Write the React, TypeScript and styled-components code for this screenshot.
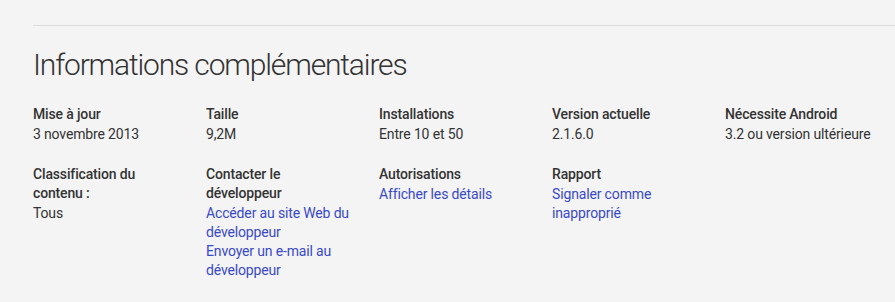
import React from "react";
import styled, { createGlobalStyle } from "styled-components";

const Global = createGlobalStyle`
  html, body { margin: 0; padding: 0; background: #f4f4f4; }
  body { font-family: Roboto, "Liberation Sans", sans-serif; color: #333; }
`;

const Section = styled.section`
  padding: 25px 0 0 33px;
`;

const Divider = styled.hr`
  margin: 0;
  border: 0;
  border-top: 1px solid #dcdcdc;
`;

const Title = styled.h2`
  margin: 19px 0 0;
  font-size: 30px;
  font-weight: 300;
  line-height: 40px;
  letter-spacing: -1.15px;
  color: #333;
`;

const Grid = styled.div`
  display: grid;
  grid-template-columns: repeat(5, 173px);
  row-gap: 21px;
  margin-top: 20px;
  font-size: 14px;
  line-height: 19px;
  letter-spacing: -0.15px;
`;

const Item = styled.div`
  padding-right: 20px;
`;

const Label = styled.div`
  font-weight: 500;
  color: #333;
  margin-bottom: 1px;
`;

const Value = styled.div`
  font-weight: 400;
  color: #333;
`;

const Link = styled.a`
  display: block;
  color: #3949c8;
  text-decoration: none;
`;

type Info = { label: string; values?: string[]; links?: string[] };

const items: Info[] = [
  { label: "Mise à jour", values: ["3 novembre 2013"] },
  { label: "Taille", values: ["9,2M"] },
  { label: "Installations", values: ["Entre 10 et 50"] },
  { label: "Version actuelle", values: ["2.1.6.0"] },
  { label: "Nécessite Android", values: ["3.2 ou version ultérieure"] },
  { label: "Classification du contenu :", values: ["Tous"] },
  {
    label: "Contacter le développeur",
    links: ["Accéder au site Web du développeur", "Envoyer un e-mail au développeur"],
  },
  { label: "Autorisations", links: ["Afficher les détails"] },
  { label: "Rapport", links: ["Signaler comme inapproprié"] },
];

export default function App() {
  return (
    <>
      <Global />
      <Section>
        <Divider />
        <Title>Informations complémentaires</Title>
        <Grid>
          {items.map((it) => (
            <Item key={it.label}>
              <Label>{it.label}</Label>
              {it.values?.map((v) => (
                <Value key={v}>{v}</Value>
              ))}
              {it.links?.map((l) => (
                <Link key={l} href="#">
                  {l}
                </Link>
              ))}
            </Item>
          ))}
        </Grid>
      </Section>
    </>
  );
}
